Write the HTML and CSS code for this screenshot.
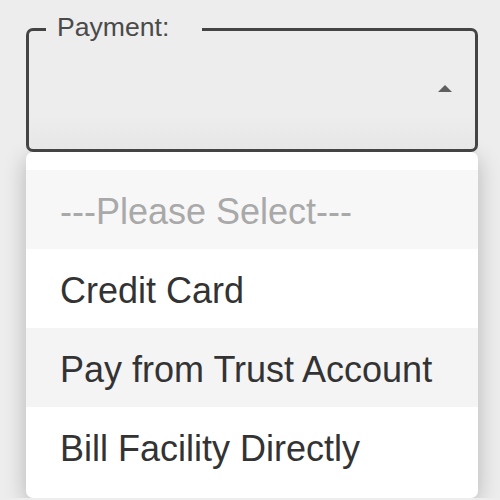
FILE: index.html
```html
<!DOCTYPE html>
<html>
<head>
<meta charset="utf-8">
<link rel="stylesheet" href="styles.css">
</head>
<body>
<div class="wrap">
  <div class="select">
    <span class="label">Payment:</span>
    <svg class="arrow" width="14" height="7" viewBox="0 0 14 7"><polygon points="0,7 7,0 14,7" fill="#5f5f5f"/></svg>
  </div>
  <ul class="menu">
    <li class="opt placeholder">---Please Select---</li>
    <li class="opt">Credit Card</li>
    <li class="opt hover">Pay from Trust Account</li>
    <li class="opt">Bill Facility Directly</li>
  </ul>
</div>
</body>
</html>
```
FILE: styles.css
```css
html, body {
  margin: 0;
  padding: 0;
  background: #ededed;
  font-family: "Liberation Sans", Arial, sans-serif;
}
.wrap {
  padding: 28px 22px 0 26px;
}
.select {
  position: relative;
  box-sizing: border-box;
  height: 124px;
  border: 3px solid #444;
  border-radius: 7px;
  background: linear-gradient(#ededed 70%, #e7e7e7);
  display: flex;
  align-items: center;
  justify-content: flex-end;
  padding-right: 23px;
}
.label {
  position: absolute;
  top: -19px;
  left: 17px;
  padding: 0 33px 0 11px;
  background: #ededed;
  color: #4a4a4a;
  font-size: 26.6px;
  line-height: 30px;
}
.arrow {
  display: block;
  margin-bottom: 3px;
}
.menu {
  list-style: none;
  margin: 0;
  padding: 18px 0 12px;
  background: #fff;
  border-radius: 7px;
  box-shadow: 0 6px 22px rgba(0, 0, 0, 0.24);
}
.opt {
  box-sizing: border-box;
  height: 79px;
  padding: 4px 0 0 34px;
  line-height: 75px;
  font-size: 36px;
  color: #333;
  white-space: nowrap;
}
.placeholder {
  background: #f7f7f7;
  color: #a9a9a9;
}
.hover {
  background: #f4f4f4;
}
```
